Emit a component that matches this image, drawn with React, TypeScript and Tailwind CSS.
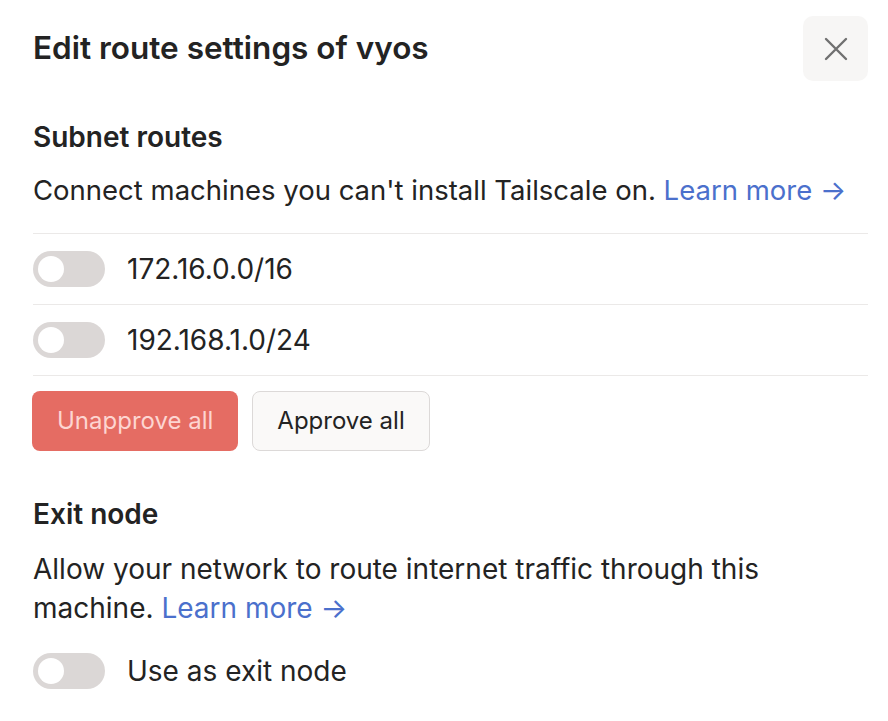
import { useState } from 'react'

function Toggle({ on, onChange }: { on: boolean; onChange: () => void }) {
  return (
    <button
      onClick={onChange}
      className={`relative w-[72px] h-[36px] rounded-full flex-shrink-0 transition-colors ${on ? 'bg-[#4b70cc]' : 'bg-[#dbd7d6]'}`}
    >
      <span
        className={`absolute top-[5px] w-[26px] h-[26px] rounded-full bg-white transition-all ${on ? 'left-[41px]' : 'left-[5px]'}`}
      />
    </button>
  )
}

const routes = ['172.16.0.0/16', '192.168.1.0/24']

export default function App() {
  const [enabled, setEnabled] = useState<Record<string, boolean>>({})
  const [exitNode, setExitNode] = useState(false)

  return (
    <div className="w-[888px] h-[721px] bg-white pl-[33px] pr-[20px] text-[#232323] font-['Inter',sans-serif] overflow-hidden">
      {/* Header */}
      <div className="flex items-center justify-between pt-[16px] h-[81px]">
        <h1 className="text-[31.5px] leading-[40px] font-semibold -mt-[2px]">Edit route settings of vyos</h1>
        <button className="w-[65px] h-[65px] rounded-[10px] bg-[#f7f6f5] flex items-center justify-center">
          <svg width="24" height="24" viewBox="0 0 24 24" fill="none" stroke="#707070" strokeWidth="2.4" strokeLinecap="round">
            <path d="M2 2L22 22M22 2L2 22" />
          </svg>
        </button>
      </div>

      {/* Subnet routes */}
      <h2 className="mt-[38px] text-[28px] leading-[36px] font-semibold">Subnet routes</h2>
      <p className="mt-[17px] text-[27.5px] leading-[36px]">
        Connect machines you can't install Tailscale on.{' '}
        <a className="text-[#4b70cc]">Learn more →</a>
      </p>

      <div className="mt-[25px] border-t border-[#ebe9e8]">
        {routes.map(r => (
          <div key={r} className="h-[71px] flex items-center gap-[22px] border-b border-[#ebe9e8]">
            <Toggle on={!!enabled[r]} onChange={() => setEnabled(e => ({ ...e, [r]: !e[r] }))} />
            <span className="text-[28px] leading-[36px]">{r}</span>
          </div>
        ))}
      </div>

      <div className="mt-[15px] flex gap-[14px] -ml-[1px]">
        <button className="h-[60px] px-[25px] rounded-[8px] bg-[#e56c63] text-[#fdd5d1] text-[24px]">Unapprove all</button>
        <button className="h-[60px] px-[24px] rounded-[8px] bg-[#faf9f8] border border-[#dcd9d8] text-[24px] text-[#232323]">Approve all</button>
      </div>

      {/* Exit node */}
      <h2 className="mt-[45px] text-[28px] leading-[36px] font-semibold">Exit node</h2>
      <div className="mt-[18px] text-[28px] leading-[39px]">
        <p>Allow your network to route internet traffic through this</p>
        <p>
          <span>machine. </span>
          <a className="text-[#4b70cc]">Learn more →</a>
        </p>
      </div>

      <div className="mt-[25px] flex items-center gap-[22px]">
        <Toggle on={exitNode} onChange={() => setExitNode(v => !v)} />
        <span className="text-[28px] leading-[36px]">Use as exit node</span>
      </div>
    </div>
  )
}
